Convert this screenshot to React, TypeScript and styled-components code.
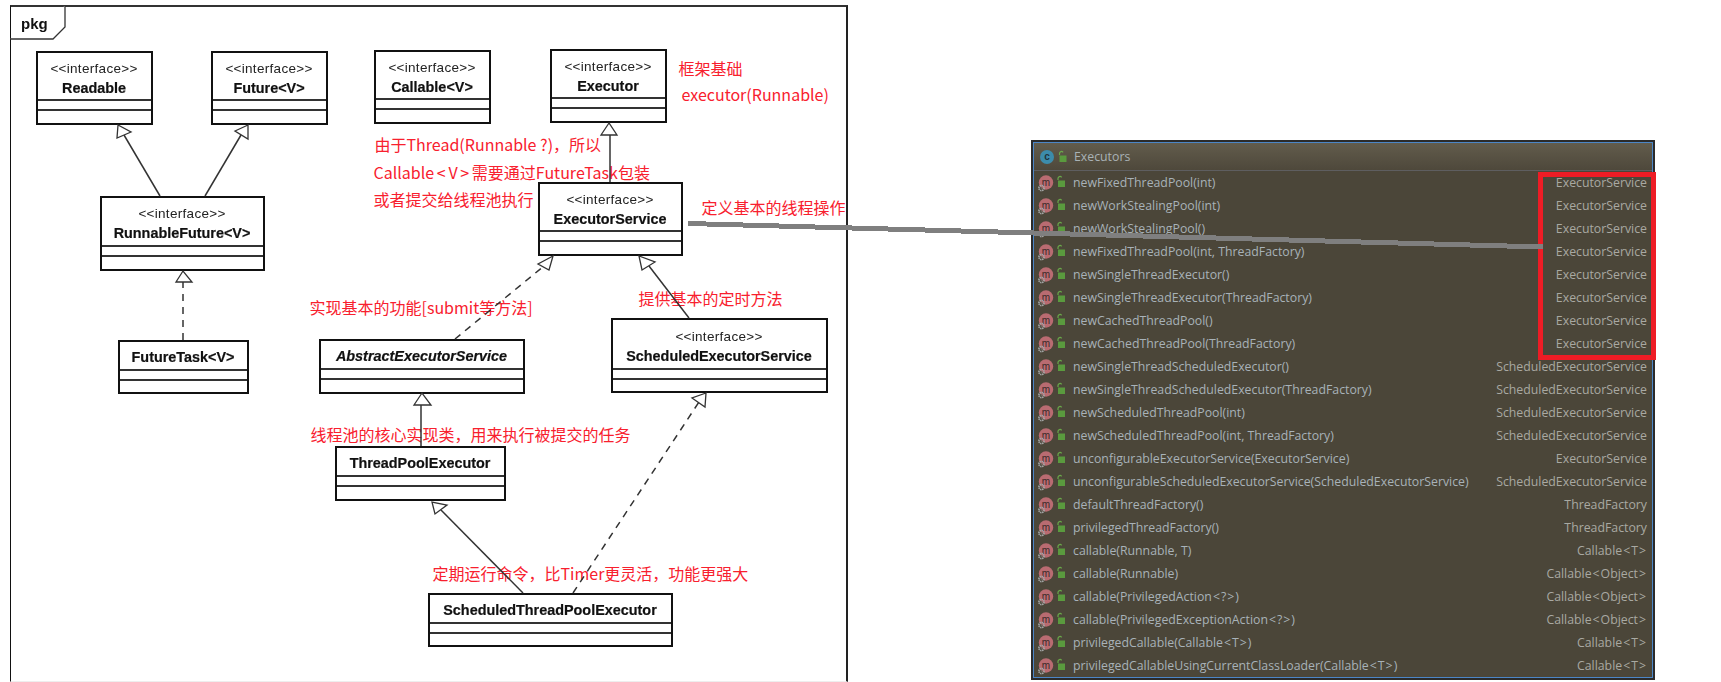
import React from "react";
import styled, { createGlobalStyle } from "styled-components";

const Global = createGlobalStyle`
  html, body { margin: 0; padding: 0; background: #fff; }
`;

const Page = styled.div`
  position: relative;
  width: 1721px;
  height: 682px;
  overflow: hidden;
  display: flex;
  align-items: flex-start;
  padding: 5px 0 0 10px;
  box-sizing: border-box;
  background: #fff;
`;

const Diagram = styled.div`
  position: relative;
  flex: none;
  width: 838px;
  height: 677px;
  box-sizing: border-box;
  border-top: 2px solid #333;
  border-left: 1.5px solid #111;
  border-right: 2px solid #222;
  border-bottom: 1px solid #eee;
`;

const FrameTab = styled.svg`
  position: absolute;
  left: -2px;
  top: -2px;
`;

const TabLabel = styled.div`
  position: absolute;
  left: 10px;
  top: 7px;
  font: bold 15px/20px "Liberation Sans", Arial, sans-serif;
  color: #111;
  filter: blur(0.3px);
`;

const Arrows = styled.svg`
  position: absolute;
  left: 0;
  top: 0;
  width: 1721px;
  height: 682px;
  filter: blur(0.25px);
  pointer-events: none;
`;

const Connector = styled.svg`
  position: absolute;
  left: 0;
  top: 0;
  width: 1721px;
  height: 682px;
  pointer-events: none;
`;

const UmlBox = styled.div<{ $x: number; $y: number; $w: number; $h: number }>`
  position: absolute;
  left: ${(p) => p.$x - 11.5}px;
  top: ${(p) => p.$y - 7}px;
  width: ${(p) => p.$w}px;
  height: ${(p) => p.$h}px;
  box-sizing: border-box;
  border: 2px solid #111;
  display: flex;
  flex-direction: column;
  background: #fff;
  filter: blur(0.3px);
`;

const UmlHead = styled.div<{ $single?: boolean }>`
  flex: 1;
  display: flex;
  flex-direction: column;
  align-items: center;
  justify-content: center;
  padding-top: ${(p) => (p.$single ? 3 : 4)}px;
  box-sizing: border-box;
  min-height: 0;
`;

const Stereotype = styled.div`
  font: 13.5px/19px "Liberation Sans", Arial, sans-serif;
  letter-spacing: 0.3px;
  color: #222;
  white-space: nowrap;
`;

const ClassName = styled.div<{ $italic?: boolean }>`
  font: ${(p) => (p.$italic ? "italic" : "normal")} bold 14.4px/20px "Liberation Sans", Arial, sans-serif;
  -webkit-text-stroke: 0.2px #111;
  color: #111;
  white-space: nowrap;
`;

const Compartment = styled.div<{ $h: number }>`
  flex: none;
  box-sizing: border-box;
  height: ${(p) => p.$h}px;
  border-top: 2px solid #333;
`;

const Note = styled.div<{ $x: number; $cy: number }>`
  position: absolute;
  left: ${(p) => p.$x - 11.5}px;
  top: ${(p) => p.$cy - 7 - 12}px;
  font: 16px/24px "Noto Sans CJK SC", "Noto Sans", sans-serif;
  color: #f8202e;
  white-space: nowrap;
`;

const WideBracket = styled.span<{ $pad: number }>`
  padding: 0 ${(p) => p.$pad}px;
`;

const Panel = styled.div`
  position: relative;
  flex: none;
  margin: 135px 0 0 183px;
  width: 624px;
  height: 540px;
  box-sizing: border-box;
  border: 2px solid #2b2b2b;
  outline: 1px solid #4c86c6;
  outline-offset: -3px;
  background: #4b4639;
  display: flex;
  flex-direction: column;
  padding: 1px;
  font: 12.3px/23px "Open Sans", "Noto Sans", sans-serif;
`;

const PanelHeader = styled.div`
  flex: none;
  height: 28px;
  box-sizing: border-box;
  display: flex;
  align-items: center;
  gap: 5px;
  padding: 0 0 0 5px;
  background: linear-gradient(#625c4c, #4e483b);
  border-bottom: 1px solid #5e5e60;
  color: #a9b2b6;
`;

const Row = styled.div`
  flex: none;
  height: 23px;
  display: flex;
  align-items: center;
  gap: 5px;
  padding: 0 5px 0 4px;
`;

const Method = styled.span`
  flex: 1;
  color: #a8b2b8;
  white-space: nowrap;
`;

const ReturnType = styled.span`
  flex: none;
  color: #a9a9a2;
  white-space: nowrap;
`;

const Highlight = styled.div`
  position: absolute;
  left: 505px;
  top: 30px;
  width: 118px;
  height: 188px;
  box-sizing: border-box;
  border: 5px solid #ee1c25;
`;

const withBrackets = (t: string, pad: number) =>
  t.split(/([<>])/).map((part, i) =>
    part === "<" || part === ">" ? (
      <WideBracket key={i} $pad={pad}>{part}</WideBracket>
    ) : (
      part
    )
  );

const MethodIcon = () => (
  <svg width="30" height="20" viewBox="0 0 30 20">
    <circle cx="8" cy="9.5" r="7.2" fill="#b96b71" />
    <text x="8" y="12.5" textAnchor="middle" fontFamily="Liberation Sans, sans-serif" fontSize="10" fill="#3a2a2a">m</text>
    <g transform="translate(3.5 15)">
      <circle r="2.6" fill="none" stroke="#a5a8a8" strokeWidth="1.6" strokeDasharray="1.4 0.6" />
      <circle r="1" fill="#6b6a62" />
    </g>
    <path d="M20 7v-1.5a2 2 0 0 1 3.6-1.2" fill="none" stroke="#6aa84a" strokeWidth="1.2" />
    <rect x="20" y="7.5" width="7" height="6.5" fill="#5a9a3e" />
  </svg>
);

const ClassIcon = () => (
  <svg width="30" height="20" viewBox="0 0 30 20">
    <circle cx="8" cy="10" r="7" fill="#3c8cab" />
    <text x="8" y="13" textAnchor="middle" fontFamily="Liberation Sans, sans-serif" fontSize="10" fontWeight="bold" fill="#20343c">c</text>
    <path d="M20.5 8v-1.5a2 2 0 0 1 3.6-1.2" fill="none" stroke="#6aa84a" strokeWidth="1.2" />
    <rect x="20.5" y="8.5" width="7" height="6.5" fill="#5a9a3e" />
  </svg>
);

type Box = { x: number; y: number; w: number; h: number; s?: boolean; name: string; i?: boolean; c: [number, number] };

const boxes: Box[] = [
  { x: 36, y: 51, w: 117, h: 74, s: true, name: "Readable", c: [10, 14] },
  { x: 211, y: 51, w: 117, h: 74, s: true, name: "Future<V>", c: [10, 14] },
  { x: 374, y: 50, w: 117, h: 74, s: true, name: "Callable<V>", c: [10, 14] },
  { x: 550, y: 49, w: 117, h: 74, s: true, name: "Executor", c: [10, 14] },
  { x: 100, y: 196, w: 165, h: 75, s: true, name: "RunnableFuture<V>", c: [10, 14] },
  { x: 538, y: 182, w: 145, h: 74, s: true, name: "ExecutorService", c: [10, 14] },
  { x: 118, y: 340, w: 131, h: 54, name: "FutureTask<V>", c: [10, 13] },
  { x: 319, y: 339, w: 206, h: 55, name: "AbstractExecutorService", i: true, c: [10, 14] },
  { x: 611, y: 318, w: 217, h: 75, s: true, name: "ScheduledExecutorService", c: [10, 13] },
  { x: 335, y: 446, w: 171, h: 55, name: "ThreadPoolExecutor", c: [10, 14] },
  { x: 428, y: 593, w: 245, h: 54, name: "ScheduledThreadPoolExecutor", c: [10, 13] },
];

const notes: { x: number; cy: number; t: string }[] = [
  { x: 679, cy: 68, t: "框架基础" },
  { x: 682, cy: 94, t: "executor(Runnable)" },
  { x: 375, cy: 144, t: "由于Thread(Runnable ?)，所以" },
  { x: 374, cy: 172, t: "Callable<V>需要通过FutureTask包装" },
  { x: 374, cy: 199, t: "或者提交给线程池执行" },
  { x: 702, cy: 207, t: "定义基本的线程操作" },
  { x: 310, cy: 307, t: "实现基本的功能[submit等方法]" },
  { x: 639, cy: 298, t: "提供基本的定时方法" },
  { x: 311, cy: 434, t: "线程池的核心实现类，用来执行被提交的任务" },
  { x: 433, cy: 573, t: "定期运行命令，比Timer更灵活，功能更强大" },
];

const ES = "ExecutorService";
const SES = "ScheduledExecutorService";
const TF = "ThreadFactory";
const CT = "Callable<T>";
const CO = "Callable<Object>";

const rows: [string, string][] = [
  ["newFixedThreadPool(int)", ES],
  ["newWorkStealingPool(int)", ES],
  ["newWorkStealingPool()", ES],
  ["newFixedThreadPool(int, ThreadFactory)", ES],
  ["newSingleThreadExecutor()", ES],
  ["newSingleThreadExecutor(ThreadFactory)", ES],
  ["newCachedThreadPool()", ES],
  ["newCachedThreadPool(ThreadFactory)", ES],
  ["newSingleThreadScheduledExecutor()", SES],
  ["newSingleThreadScheduledExecutor(ThreadFactory)", SES],
  ["newScheduledThreadPool(int)", SES],
  ["newScheduledThreadPool(int, ThreadFactory)", SES],
  ["unconfigurableExecutorService(ExecutorService)", ES],
  ["unconfigurableScheduledExecutorService(ScheduledExecutorService)", SES],
  ["defaultThreadFactory()", TF],
  ["privilegedThreadFactory()", TF],
  ["callable(Runnable, T)", CT],
  ["callable(Runnable)", CO],
  ["callable(PrivilegedAction<?>)", CO],
  ["callable(PrivilegedExceptionAction<?>)", CO],
  ["privilegedCallable(Callable<T>)", CT],
  ["privilegedCallableUsingCurrentClassLoader(Callable<T>)", CT],
];

const solid: number[][] = [
  [160, 196, 124, 135],
  [205, 196, 241, 135],
  [610, 135, 610, 182],
  [689, 318, 649, 266],
  [421, 405, 421, 446],
  [523, 593, 441, 510],
];
const dashed: number[][] = [
  [183, 340, 183, 282],
  [455, 339, 544, 266],
  [573, 593, 699, 402],
];
const heads: string[] = [
  "118,125 117,138 131,132",
  "248,125 235,131 248,139",
  "183,271 176,282 192,282",
  "609,123 601,135 617,135",
  "553,256 538,264 549,270",
  "639,256 642,270 655,262",
  "422,393 414,405 431,405",
  "706,393 692,398 705,407",
  "432,502 435,514 447,505",
];

export default function App() {
  return (
    <Page>
      <Global />
      <Diagram>
        <FrameTab width="60" height="36" viewBox="0 0 60 36">
          <path d="M1 34H44L56 22V1" fill="#fff" stroke="#333" strokeWidth="1.3" />
        </FrameTab>
        <TabLabel>pkg</TabLabel>
        {boxes.map((b) => (
          <UmlBox key={b.name} $x={b.x} $y={b.y} $w={b.w} $h={b.h}>
            <UmlHead $single={!b.s}>
              {b.s && <Stereotype>{"<<interface>>"}</Stereotype>}
              <ClassName $italic={b.i}>{b.name}</ClassName>
            </UmlHead>
            <Compartment $h={b.c[0]} />
            <Compartment $h={b.c[1]} />
          </UmlBox>
        ))}
        {notes.map((n) => (
          <Note key={n.t} $x={n.x} $cy={n.cy}>{withBrackets(n.t, 2.7)}</Note>
        ))}
      </Diagram>
      <Panel>
        <PanelHeader>
          <ClassIcon />
          <span>Executors</span>
        </PanelHeader>
        {rows.map(([m, r]) => (
          <Row key={m}>
            <MethodIcon />
            <Method>{withBrackets(m, 1)}</Method>
            <ReturnType>{withBrackets(r, 1)}</ReturnType>
          </Row>
        ))}
        <Highlight />
      </Panel>
      <Arrows viewBox="0 0 1721 682">
        {solid.map((l, i) => (
          <line key={i} x1={l[0]} y1={l[1]} x2={l[2]} y2={l[3]} stroke="#333" strokeWidth="1.5" />
        ))}
        {dashed.map((l, i) => (
          <line key={i} x1={l[0]} y1={l[1]} x2={l[2]} y2={l[3]} stroke="#333" strokeWidth="1.5" strokeDasharray="7 6" />
        ))}
        {heads.map((p) => (
          <polygon key={p} points={p} fill="#fff" stroke="#333" strokeWidth="1.3" />
        ))}
      </Arrows>
      <Connector viewBox="0 0 1721 682">
        <line x1="688" y1="223.5" x2="1543" y2="247" stroke="#7f7f7f" strokeWidth="5" shapeRendering="crispEdges" />
      </Connector>
    </Page>
  );
}
